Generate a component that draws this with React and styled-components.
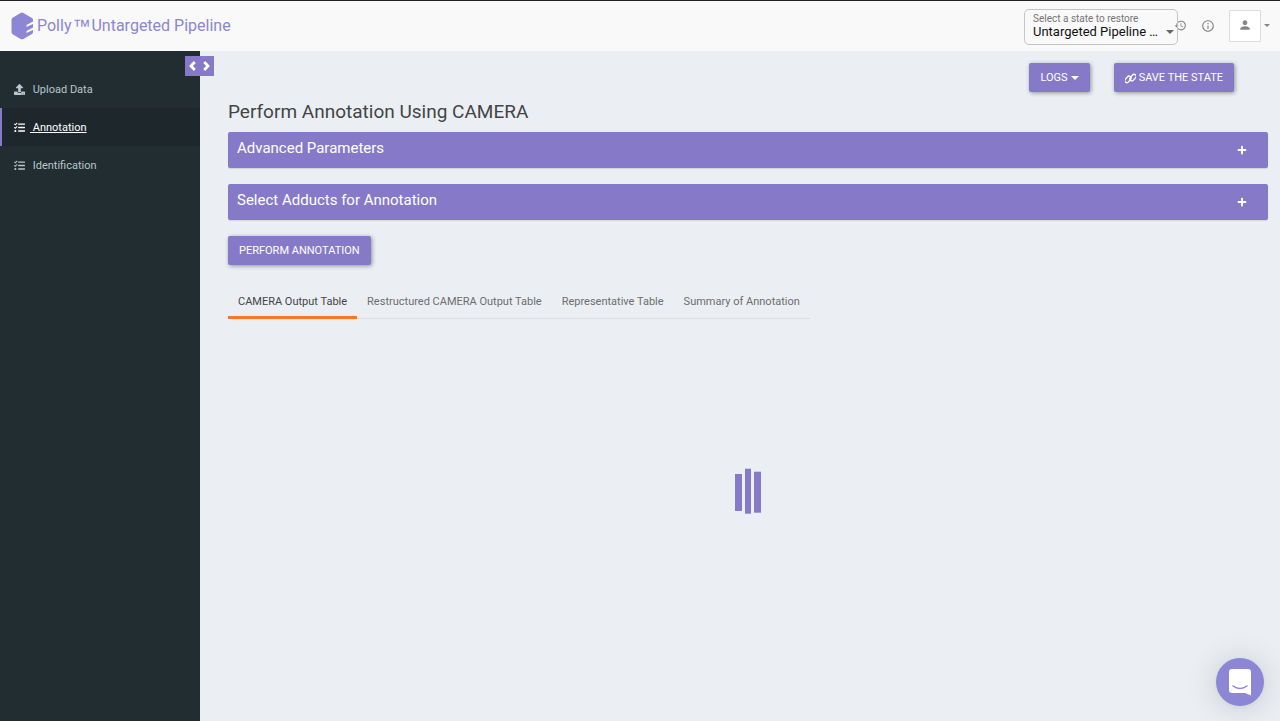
import React from "react";
import styled, { createGlobalStyle, css } from "styled-components";
import { FaUpload, FaTasks, FaPlus } from "react-icons/fa";
import { MdHistory, MdInfoOutline, MdPerson } from "react-icons/md";

const purple = "#867ac8";
const logoPurple = "#8c86d5";

const GlobalStyle = createGlobalStyle`
  *, *::before, *::after { box-sizing: border-box; }
  body {
    margin: 0;
    font-family: Roboto, "Liberation Sans", sans-serif;
    font-size: 11px;
    background: #ebeff4;
    color: #444;
  }
  button, select { font-family: inherit; }
  svg { display: block; flex: none; }
`;

const Page = styled.div`
  display: flex;
  flex-direction: column;
  min-height: 100vh;
`;

const Header = styled.header`
  display: flex;
  align-items: center;
  justify-content: space-between;
  height: 51px;
  padding: 0 10px 0 11px;
  border-top: 1px solid #222;
  background: #f9f9f9;
`;

const Brand = styled.a`
  display: flex;
  align-items: center;
  gap: 3px;
  color: ${logoPurple};
  font-size: 16px;
  line-height: 24px;
  text-decoration: none;
`;

const BrandName = styled.span`
  display: flex;
  gap: 1px;
`;

const Trademark = styled.span`
  font-family: "Liberation Sans", sans-serif;
  font-size: 18px;
`;

const HeaderTools = styled.div`
  display: flex;
  align-items: center;
  padding-top: 1px;
`;

const StateField = styled.div`
  position: relative;
  display: flex;
  flex-direction: column;
  width: 154px;
  height: 36px;
  padding: 3px 8px;
  border: 1px solid #c4c4c4;
  border-radius: 5px;
`;

const StateLabel = styled.label`
  font-size: 10px;
  line-height: 12px;
  color: #757575;
`;

const StateSelect = styled.select`
  appearance: none;
  width: 100%;
  height: 14px;
  padding: 0 10px 0 0;
  border: 0;
  background: transparent;
  color: #111;
  font-size: 13px;
  line-height: 14px;
  text-overflow: ellipsis;
`;

const Caret = styled.span`
  flex: none;
  border: ${(p) => p.$size || 4}px solid transparent;
  border-top-color: currentColor;
  border-bottom: 0;
`;

const SelectArrow = styled(Caret)`
  position: absolute;
  right: 3px;
  bottom: 10px;
  color: #666;
  pointer-events: none;
`;

const IconButton = styled.button`
  display: flex;
  padding: 0 0 2px;
  margin-left: ${(p) => p.$gap || 0}px;
  border: 0;
  background: transparent;
  color: #858585;
`;

const UserButton = styled.button`
  display: flex;
  align-items: center;
  justify-content: center;
  width: 32px;
  height: 32px;
  margin: 0 3px 2px 14px;
  padding: 0 0 2px;
  border: 1px solid #ddd;
  background: #fff;
  color: #858585;
`;

const Body = styled.div`
  display: flex;
  flex: 1;
`;

const Sidebar = styled.nav`
  position: relative;
  flex: none;
  width: 200px;
  padding-top: 19px;
  background: #222d32;
`;

const SideToggle = styled.button`
  position: absolute;
  top: 5px;
  right: -14px;
  display: flex;
  align-items: center;
  justify-content: space-between;
  width: 29px;
  height: 20px;
  padding: 0 4px 1px;
  border: 0;
  background: ${purple};
  color: #fff;
`;

const SideLink = styled.a`
  display: flex;
  align-items: center;
  gap: 5px;
  height: 38px;
  padding-left: 12px;
  border-left: 2px solid transparent;
  color: #b8c7ce;
  line-height: 16px;
  text-decoration: none;
  ${(p) =>
    p.$active &&
    css`
      border-left-color: ${purple};
      background: #1e282c;
      color: #fff;
      text-decoration: underline;
    `}
`;

const SideText = styled.span`
  padding-top: 1px;
  white-space: pre;
`;

const Main = styled.main`
  display: flex;
  flex: 1;
  flex-direction: column;
  align-items: stretch;
  min-width: 0;
  padding: 12px 12px 0 28px;
`;

const Actions = styled.div`
  display: flex;
  justify-content: flex-end;
  gap: 24px;
  padding-right: 34px;
`;

const Button = styled.button`
  display: flex;
  align-items: center;
  align-self: flex-start;
  gap: 3px;
  height: 29px;
  padding: 1px 11px 0;
  border: 0;
  border-radius: 2px;
  background: ${purple};
  box-shadow: 1px 1px 4px rgba(0, 0, 0, 0.4);
  color: #fff;
  font-size: 11px;
  line-height: 16px;
  white-space: nowrap;
`;

const Title = styled.h1`
  margin: 8px 0 8px;
  color: #444;
  font-size: 19px;
  font-weight: 400;
  line-height: 24px;
`;

const Panel = styled.button`
  display: flex;
  align-items: center;
  justify-content: space-between;
  height: 36px;
  margin-bottom: 16px;
  padding: 0 21px 0 9px;
  border: 0;
  border-radius: 2px;
  background: ${purple};
  box-shadow: 0 1px 1px rgba(0, 0, 0, 0.12);
  color: #fff;
  text-align: left;
`;

const PanelTitle = styled.span`
  padding-bottom: 4px;
  font-size: 15px;
  line-height: 20px;
`;

const Tabs = styled.div`
  display: flex;
  align-self: flex-start;
  margin-top: 19px;
  border-bottom: 1px solid #dbdee1;
`;

const Tab = styled.button`
  height: 35px;
  margin-bottom: -1px;
  padding: 4px 10px 0;
  border: 0;
  border-bottom: 3px solid ${(p) => (p.$active ? "#ff7428" : "transparent")};
  background: transparent;
  color: ${(p) => (p.$active ? "#444" : "#6d6d6d")};
  font-size: 11px;
  line-height: 16px;
  white-space: nowrap;
`;

const Output = styled.section`
  display: flex;
  flex: 1;
  align-items: center;
  justify-content: center;
  min-height: 160px;
  padding-bottom: 58px;
`;

const ChatButton = styled.button`
  position: fixed;
  right: 16px;
  bottom: 15px;
  display: flex;
  align-items: center;
  justify-content: center;
  width: 48px;
  height: 48px;
  padding: 0;
  border: 0;
  border-radius: 50%;
  background: ${logoPurple};
  box-shadow: 0 1px 6px rgba(0, 0, 0, 0.06), 0 2px 32px rgba(0, 0, 0, 0.16);
`;

const navItems = [
  { label: "Upload Data", Icon: FaUpload },
  { label: "Annotation", Icon: FaTasks, active: true },
  { label: "Identification", Icon: FaTasks },
];

const tabs = [
  "CAMERA Output Table",
  "Restructured CAMERA Output Table",
  "Representative Table",
  "Summary of Annotation",
];

function Logo() {
  return (
    <svg width="23" height="28" viewBox="0 0 23 28" aria-hidden="true">
      <path
        fill={logoPurple}
        d="M9.6 1Q11 .2 12.4 1L21 6Q22 6.6 22 8V9.5L15.5 13V15L22 12V15.5L15.5 19V21L22 18V20Q22 21.5 21 22L12.4 27Q11 27.7 9.6 27L2 22.5Q.5 21.6 .5 20V8Q.5 6.5 2 5.6Z"
      />
    </svg>
  );
}

function Chevron({ d }) {
  return (
    <svg width="7" height="10" viewBox="0 0 7 10" fill="none" stroke="currentColor" strokeWidth="2.8" aria-hidden="true">
      <path d={d} />
    </svg>
  );
}

function ChainIcon() {
  return (
    <svg width="11" height="11" viewBox="0 0 24 24" fill="none" stroke="currentColor" strokeWidth="2.8" aria-hidden="true">
      <g transform="rotate(-50 12 12)">
        <rect x="-1" y="4.500" width="16" height="9" rx="4.500" />
        <rect x="9" y="10.500" width="16" height="9" rx="4.500" />
      </g>
    </svg>
  );
}

function Loader() {
  return (
    <svg width="26" height="46" viewBox="0 0 26 46" fill={purple} role="img" aria-label="Loading">
      <rect x="0" y="6" width="7" height="37" />
      <rect x="10" y="0.7" width="6" height="45" />
      <rect x="19" y="3.7" width="7" height="41" />
    </svg>
  );
}

export default function App() {
  return (
    <>
      <GlobalStyle />
      <Page>
        <Header>
          <Brand href="#">
            <Logo />
            <BrandName>
              <span>Polly</span>
              <Trademark>™</Trademark>
              <span>Untargeted Pipeline</span>
            </BrandName>
          </Brand>
          <HeaderTools>
            <StateField>
              <StateLabel htmlFor="restore">Select a state to restore</StateLabel>
              <StateSelect id="restore">
                <option>Untargeted Pipeline ...</option>
              </StateSelect>
              <SelectArrow />
            </StateField>
            <IconButton aria-label="History" $gap={-4}>
              <MdHistory size={13} />
            </IconButton>
            <IconButton aria-label="Information" $gap={14}>
              <MdInfoOutline size={14} />
            </IconButton>
            <UserButton aria-label="Account">
              <MdPerson size={14} />
            </UserButton>
            <IconButton aria-label="Account menu">
              <Caret $size={3} />
            </IconButton>
          </HeaderTools>
        </Header>
        <Body>
          <Sidebar>
            {navItems.map(({ label, Icon, active }) => (
              <SideLink href="#" key={label} $active={active}>
                <Icon size={11} />
                <SideText>{" " + label}</SideText>
              </SideLink>
            ))}
            <SideToggle aria-label="Toggle sidebar">
              <Chevron d="M5.8 1L2 5L5.8 9" />
              <Chevron d="M1.2 1L5 5L1.2 9" />
            </SideToggle>
          </Sidebar>
          <Main>
            <Actions>
              <Button>
                LOGS
                <Caret />
              </Button>
              <Button>
                <ChainIcon />
                SAVE THE STATE
              </Button>
            </Actions>
            <Title>Perform Annotation Using CAMERA</Title>
            <Panel>
              <PanelTitle>Advanced Parameters</PanelTitle>
              <FaPlus size={10} />
            </Panel>
            <Panel>
              <PanelTitle>Select Adducts for Annotation</PanelTitle>
              <FaPlus size={10} />
            </Panel>
            <Button>PERFORM ANNOTATION</Button>
            <Tabs role="tablist">
              {tabs.map((label, i) => (
                <Tab key={label} role="tab" aria-selected={i === 0} $active={i === 0}>
                  {label}
                </Tab>
              ))}
            </Tabs>
            <Output>
              <Loader />
            </Output>
          </Main>
        </Body>
      </Page>
      <ChatButton aria-label="Open chat">
        <svg width="24" height="27" viewBox="0 0 24 27">
          <path fill="#fff" d="M4 0H20Q23 0 23 3V26.5L17 24H4Q1 24 1 21V3Q1 0 4 0Z" />
          <path d="M5 17Q12 22 19 17" fill="none" stroke={logoPurple} strokeWidth="1.5" strokeLinecap="round" />
        </svg>
      </ChatButton>
    </>
  );
}
